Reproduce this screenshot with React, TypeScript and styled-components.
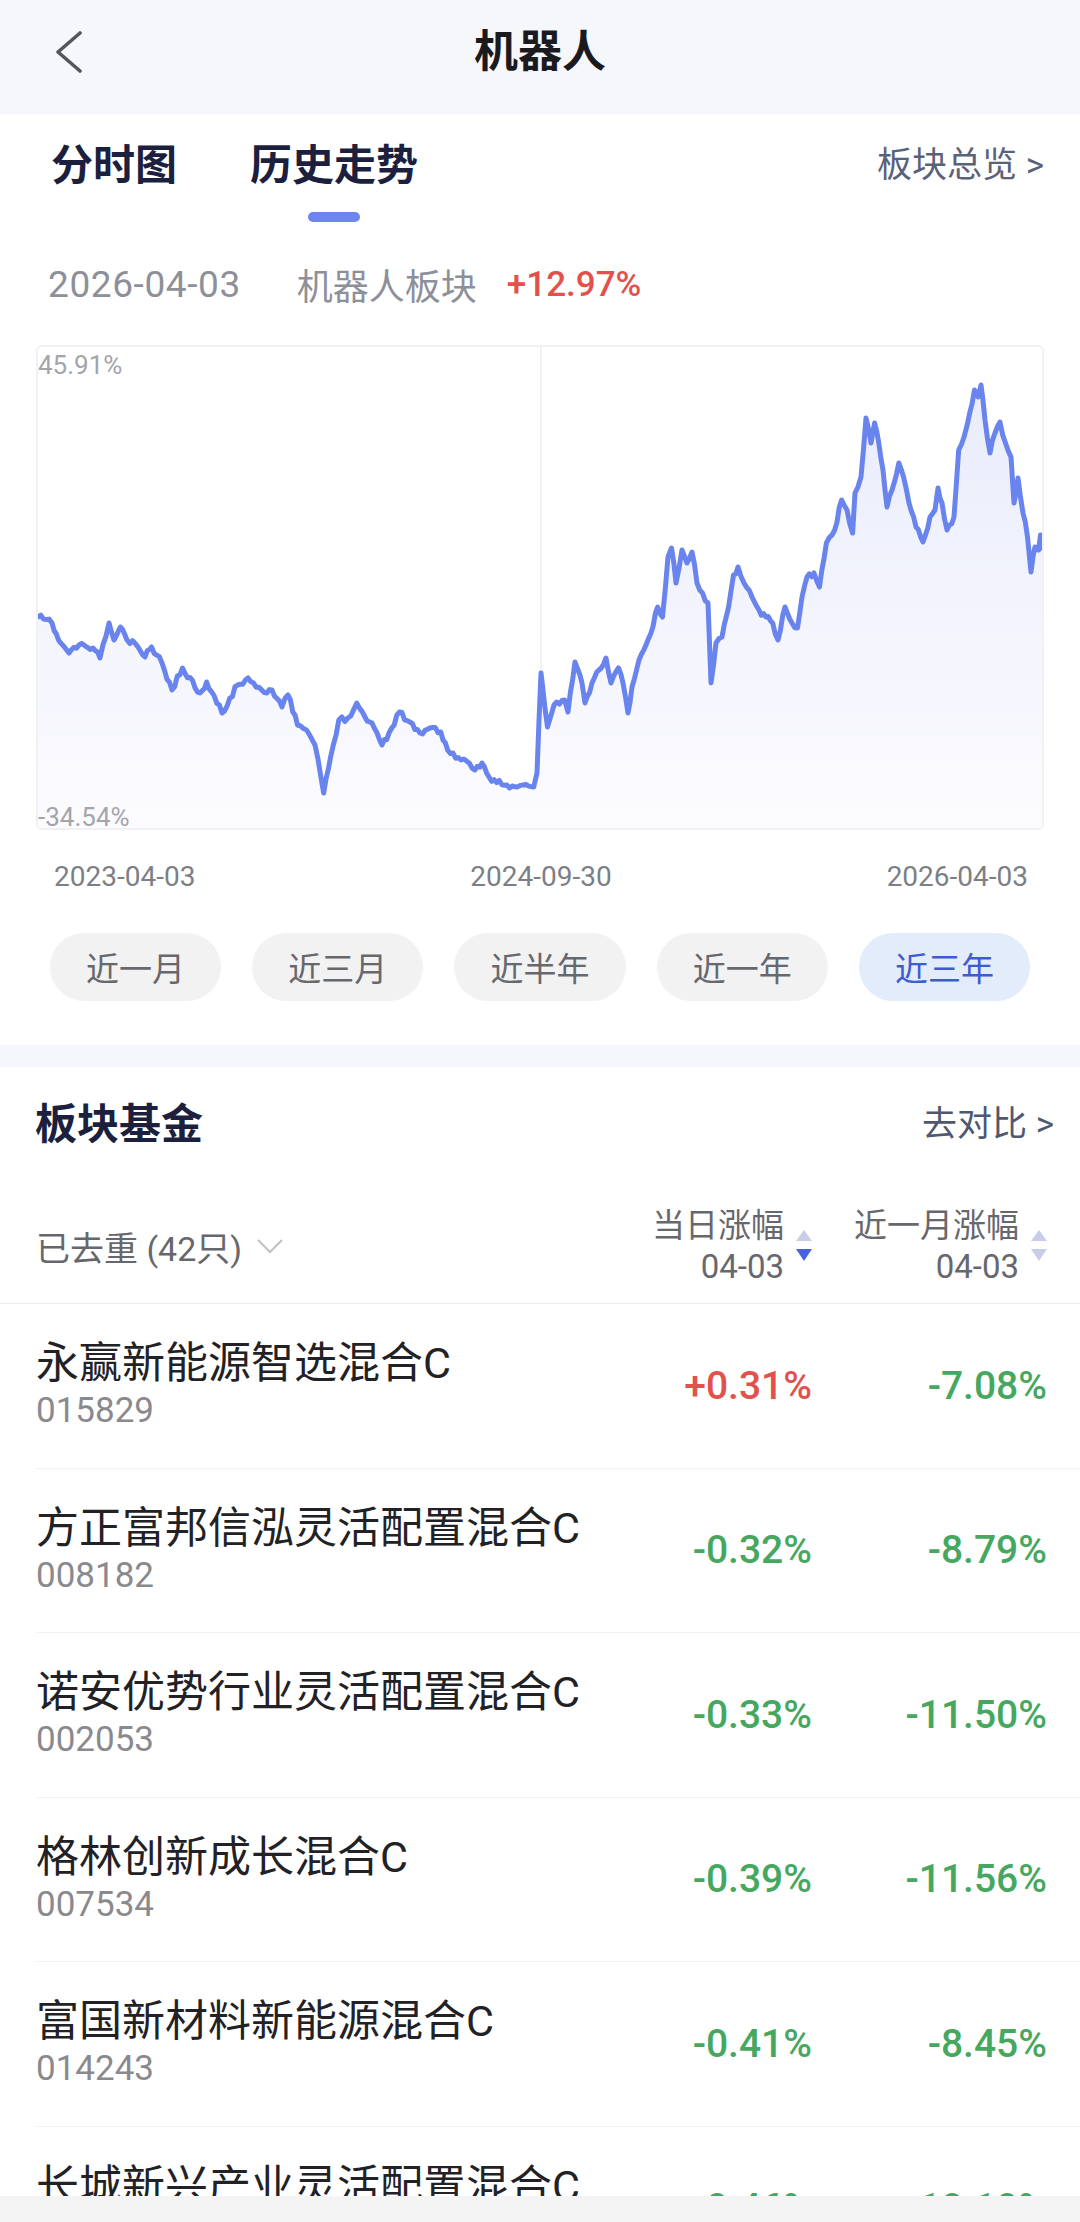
import React from "react";
import styled, { createGlobalStyle } from "styled-components";

const GlobalStyle = createGlobalStyle`
  html, body { margin: 0; padding: 0; background: #fff; }
  body {
    font-family: Roboto, "Noto Sans CJK SC", "Noto Sans", sans-serif;
    -webkit-font-smoothing: antialiased;
  }
  * { box-sizing: border-box; }
`;

const Page = styled.div`
  width: 1080px;
  height: 2222px;
  overflow: hidden;
  display: flex;
  flex-direction: column;
  background: #fff;
`;

const NavBar = styled.header`
  flex-shrink: 0;
  height: 114px;
  background: #f6f7fa;
  display: grid;
  grid-template-columns: 180px 1fr 180px;
  align-items: center;
  padding-bottom: 10px;
`;

const BackButton = styled.button`
  justify-self: start;
  border: 0;
  background: none;
  padding: 0 0 0 54px;
  display: flex;
  align-items: center;
`;

const Title = styled.h1`
  margin: 0;
  text-align: center;
  font-size: 44px;
  font-weight: 600;
  line-height: 60px;
  color: #1b1b1f;
`;

const Main = styled.main`
  flex: 1;
  min-height: 0;
  overflow: hidden;
`;

const BottomBar = styled.div`
  flex-shrink: 0;
  height: 26px;
  background: #f4f4f5;
`;

const TabBar = styled.div`
  display: flex;
  align-items: flex-start;
  padding: 22px 36px 0 51px;
`;

const Tab = styled.div<{ $active?: boolean }>`
  display: flex;
  flex-direction: column;
  align-items: center;
  margin-right: 73px;
  font-size: 42px;
  font-weight: 700;
  line-height: 60px;
  color: #1c1f3d;
  &::after {
    content: "";
    margin-top: 16px;
    width: 52px;
    height: 10px;
    border-radius: 5px;
    background: ${(p) => (p.$active ? "#6d85f0" : "transparent")};
  }
`;

const TextLink = styled.div<{ $size: number; $color: string }>`
  margin-left: auto;
  font-size: ${(p) => p.$size}px;
  line-height: 60px;
  color: ${(p) => p.$color};
  white-space: nowrap;
`;

const SummaryRow = styled.div`
  display: flex;
  align-items: center;
  height: 50px;
  margin-top: 37px;
  padding-left: 48px;
  color: #8d9099;
`;

const SummaryDate = styled.span`
  font-size: 37px;
  letter-spacing: 0.6px;
`;

const SummaryLabel = styled.span`
  margin-left: 56px;
  font-size: 36px;
`;

const SummaryChange = styled.span`
  margin-left: 30px;
  font-size: 35px;
  font-weight: 500;
  color: #e2514c;
`;

const ChartBox = styled.div`
  position: relative;
  margin: 36px 36px 0;
  height: 485px;
  border: 2px solid #f1f1f3;
  border-radius: 6px;
  overflow: hidden;
`;

const ChartSvg = styled.svg`
  display: block;
  width: 100%;
  height: 100%;
`;

const AxisLabel = styled.span<{ $pos: "top" | "bottom" }>`
  position: absolute;
  left: 0;
  ${(p) => (p.$pos === "top" ? "top: 7px;" : "bottom: 0;")}
  font-size: 26px;
  line-height: 22px;
  color: #a3a5ab;
`;

const DateAxis = styled.div`
  display: flex;
  justify-content: space-between;
  padding: 0 52px 0 54px;
  margin-top: 27px;
  font-size: 28px;
  line-height: 40px;
  color: #7d7f86;
`;

const RangeGroup = styled.div`
  display: grid;
  grid-template-columns: repeat(5, 1fr);
  gap: 31px;
  padding: 0 50px;
  margin-top: 36px;
`;

const RangePill = styled.button<{ $active?: boolean }>`
  height: 68px;
  padding: 0;
  border: 0;
  border-radius: 34px;
  font-family: inherit;
  font-size: 33px;
  background: ${(p) => (p.$active ? "#e2ecfa" : "#f2f2f3")};
  color: ${(p) => (p.$active ? "#3f5bd1" : "#67686d")};
`;

const SectionGap = styled.div`
  margin-top: 44px;
  height: 22px;
  background: #f6f7fa;
`;

const SectionHeader = styled.div`
  display: flex;
  align-items: center;
  padding: 28px 26px 0 35px;
`;

const SectionTitle = styled.h2`
  margin: 0;
  font-size: 42px;
  font-weight: 700;
  line-height: 60px;
  color: #1c1f3d;
`;

const ListGrid = styled.div`
  display: grid;
  grid-template-columns: 576px 200px 235px;
`;

const FilterRow = styled(ListGrid)`
  height: 149px;
  padding: 50px 33px 0 36px;
  align-items: start;
  border-bottom: 1.5px solid #ececee;
`;

const FilterToggle = styled.div`
  display: flex;
  align-items: center;
  height: 82px;
  font-size: 34px;
  color: #66676c;
  gap: 14px;
`;

const ColHeader = styled.div`
  display: flex;
  justify-content: flex-end;
  align-items: center;
  height: 82px;
`;

const ColHeaderText = styled.div`
  text-align: right;
  font-size: 33px;
  line-height: 41px;
  color: #67686d;
  white-space: nowrap;
`;

const SortIcon = styled.svg`
  margin-left: 12px;
  flex-shrink: 0;
`;

const FundRow = styled(ListGrid)`
  height: 164.5px;
  margin-left: 36px;
  padding-right: 33px;
  align-items: center;
  border-bottom: 1.5px solid #f1f1f2;
`;

const FundInfo = styled.div`
  display: flex;
  flex-direction: column;
  min-width: 0;
`;

const FundName = styled.div`
  font-size: 43px;
  line-height: 50px;
  color: #222226;
  white-space: nowrap;
`;

const FundCode = styled.div`
  font-size: 35px;
  line-height: 45px;
  color: #8a8a8e;
`;

const Change = styled.div<{ $up: boolean }>`
  text-align: right;
  font-size: 39px;
  font-weight: 500;
  color: ${(p) => (p.$up ? "#e2514c" : "#46a860")};
`;

/* ---------- chart data ---------- */
const KEY: [number, number][] = [
  [38, 617], [52, 623], [58.5, 640], [69, 653], [79, 645], [93, 648], [100, 658],
  [109, 623], [114, 640], [120.5, 627], [127, 640], [138, 647], [145, 657], [151.5, 647],
  [162, 663], [172, 690], [182.5, 668], [200, 693], [206.6, 682], [222, 713], [237.6, 685],
  [248, 678], [261.7, 690], [272, 690], [282, 707], [288, 695], [297.5, 725], [306.5, 730],
  [315, 745], [323.7, 793], [330.6, 757], [338.8, 720], [347.8, 718], [356.7, 703],
  [365, 717], [372, 723], [382, 745], [389, 733], [399.4, 712], [409.8, 722], [420, 733],
  [430, 728], [440.8, 732], [447.6, 750], [461, 760], [475, 770], [482, 763], [489, 777],
  [509.6, 788], [523, 785], [533.7, 787], [537, 773], [541, 673], [547.5, 727], [554, 705],
  [564.7, 700], [568, 712], [575, 662], [582, 683], [585, 703], [592, 683], [599, 670],
  [606, 658], [611, 683], [618.5, 668], [623, 683], [628, 713], [632, 687], [639, 660],
  [646, 645], [651, 633], [657.7, 607], [662.5, 617], [668, 557], [671.5, 548], [676, 583],
  [682, 550], [687, 563], [692, 552], [697, 583], [702.5, 593], [708, 603], [711, 683],
  [716, 643], [722, 637], [728.6, 607], [733.5, 575], [738, 567], [744, 583], [752, 597],
  [759, 610], [766, 617], [772.7, 623], [778, 640], [785, 607], [792, 623], [797.5, 628],
  [802, 597], [807, 577], [814, 573], [819.5, 587], [826.4, 543], [834.7, 530], [841.6, 500],
  [847, 510], [852.6, 533], [855, 493], [861, 477], [866, 418], [871, 443], [874.6, 423],
  [878.8, 443], [883, 470], [887, 507], [892, 490], [898.8, 463], [903.6, 477], [909, 503],
  [916, 527], [923, 542], [930, 517], [935, 510], [938, 488], [942, 503], [947, 530],
  [954, 517], [958.7, 450], [964, 437], [969.7, 413], [974.5, 390], [978, 397], [981, 385],
  [985, 420], [990, 453], [995, 433], [1000, 422], [1005.5, 443], [1011, 457], [1014, 503],
  [1018, 478], [1023, 513], [1027.5, 537], [1031, 572], [1035, 547], [1038.6, 550],
  [1040.5, 535], [1042, 548],
];

function buildPoints(): [number, number][] {
  let seed = 11;
  const rand = () => {
    seed = (seed * 16807) % 2147483647;
    return seed / 2147483647;
  };
  const out: [number, number][] = [];
  for (let i = 0; i < KEY.length - 1; i++) {
    const [x0, y0] = KEY[i];
    const [x1, y1] = KEY[i + 1];
    const n = Math.max(1, Math.round((x1 - x0) / 2.6));
    for (let k = 0; k < n; k++) {
      const t = k / n;
      const j = k === 0 ? 0 : (rand() - 0.5) * 6;
      out.push([x0 + (x1 - x0) * t, y0 + (y1 - y0) * t + j]);
    }
  }
  out.push(KEY[KEY.length - 1]);
  return out;
}

const PTS = buildPoints();
const LINE_D = PTS.map(([x, y], i) => `${i ? "L" : "M"}${x.toFixed(1)} ${y.toFixed(1)}`).join(" ");
const AREA_D = `${LINE_D} L${PTS[PTS.length - 1][0]} 830 L38 830 Z`;

const ranges = ["近一月", "近三月", "近半年", "近一年", "近三年"];

const funds = [
  { name: "永赢新能源智选混合C", code: "015829", day: "+0.31%", month: "-7.08%" },
  { name: "方正富邦信泓灵活配置混合C", code: "008182", day: "-0.32%", month: "-8.79%" },
  { name: "诺安优势行业灵活配置混合C", code: "002053", day: "-0.33%", month: "-11.50%" },
  { name: "格林创新成长混合C", code: "007534", day: "-0.39%", month: "-11.56%" },
  { name: "富国新材料新能源混合C", code: "014243", day: "-0.41%", month: "-8.45%" },
  { name: "长城新兴产业灵活配置混合C", code: "009174", day: "-0.46%", month: "-10.10%" },
];

const SortArrows = ({ active }: { active?: "down" }) => (
  <SortIcon width="16" height="32" viewBox="0 0 16 32">
    <polygon points="8,0 16,11 0,11" fill="#c9cdea" />
    <polygon points="0,19 16,19 8,31" fill={active === "down" ? "#4862df" : "#c9cdea"} />
  </SortIcon>
);

export default function App() {
  return (
    <Page>
      <GlobalStyle />
      <NavBar>
        <BackButton aria-label="返回">
          <svg width="30" height="42" viewBox="0 0 30 42">
            <polyline
              points="26,2 4,21 26,40"
              fill="none"
              stroke="#55565b"
              strokeWidth="3.6"
              strokeLinecap="round"
              strokeLinejoin="round"
            />
          </svg>
        </BackButton>
        <Title>机器人</Title>
        <div />
      </NavBar>

      <Main>
        <TabBar>
          <Tab>分时图</Tab>
          <Tab $active>历史走势</Tab>
          <TextLink $size={35} $color="#5a627a">板块总览 &gt;</TextLink>
        </TabBar>

        <SummaryRow>
          <SummaryDate>2026-04-03</SummaryDate>
          <SummaryLabel>机器人板块</SummaryLabel>
          <SummaryChange>+12.97%</SummaryChange>
        </SummaryRow>

        <ChartBox>
          <ChartSvg viewBox="38 347 1004 481" preserveAspectRatio="none">
            <defs>
              <linearGradient id="areaFill" gradientUnits="userSpaceOnUse" x1="0" y1="385" x2="0" y2="830">
                <stop offset="0" stopColor="#e9ecfb" />
                <stop offset="1" stopColor="#fcfcff" />
              </linearGradient>
            </defs>
            <line x1="541" y1="347" x2="541" y2="830" stroke="#eeeef1" strokeWidth="1.5" />
            <path d={AREA_D} fill="url(#areaFill)" />
            <path
              d={LINE_D}
              fill="none"
              stroke="#6a84ee"
              strokeWidth="5"
              strokeLinejoin="round"
              strokeLinecap="round"
            />
          </ChartSvg>
          <AxisLabel $pos="top">45.91%</AxisLabel>
          <AxisLabel $pos="bottom">-34.54%</AxisLabel>
        </ChartBox>

        <DateAxis>
          <span>2023-04-03</span>
          <span>2024-09-30</span>
          <span>2026-04-03</span>
        </DateAxis>

        <RangeGroup>
          {ranges.map((r, i) => (
            <RangePill key={r} $active={i === ranges.length - 1}>
              {r}
            </RangePill>
          ))}
        </RangeGroup>

        <SectionGap />

        <SectionHeader>
          <SectionTitle>板块基金</SectionTitle>
          <TextLink $size={35} $color="#4f5870">去对比 &gt;</TextLink>
        </SectionHeader>

        <FilterRow>
          <FilterToggle>
            <span>已去重 (42只)</span>
            <svg width="28" height="16" viewBox="0 0 28 16">
              <polyline points="2,2 14,14 26,2" fill="none" stroke="#c2c2c6" strokeWidth="2.2" />
            </svg>
          </FilterToggle>
          <ColHeader>
            <ColHeaderText>
              当日涨幅
              <br />
              04-03
            </ColHeaderText>
            <SortArrows active="down" />
          </ColHeader>
          <ColHeader>
            <ColHeaderText>
              近一月涨幅
              <br />
              04-03
            </ColHeaderText>
            <SortArrows />
          </ColHeader>
        </FilterRow>

        {funds.map((f) => (
          <FundRow key={f.code}>
            <FundInfo>
              <FundName>{f.name}</FundName>
              <FundCode>{f.code}</FundCode>
            </FundInfo>
            <Change $up={f.day.startsWith("+")}>{f.day}</Change>
            <Change $up={f.month.startsWith("+")}>{f.month}</Change>
          </FundRow>
        ))}
      </Main>

      <BottomBar />
    </Page>
  );
}
